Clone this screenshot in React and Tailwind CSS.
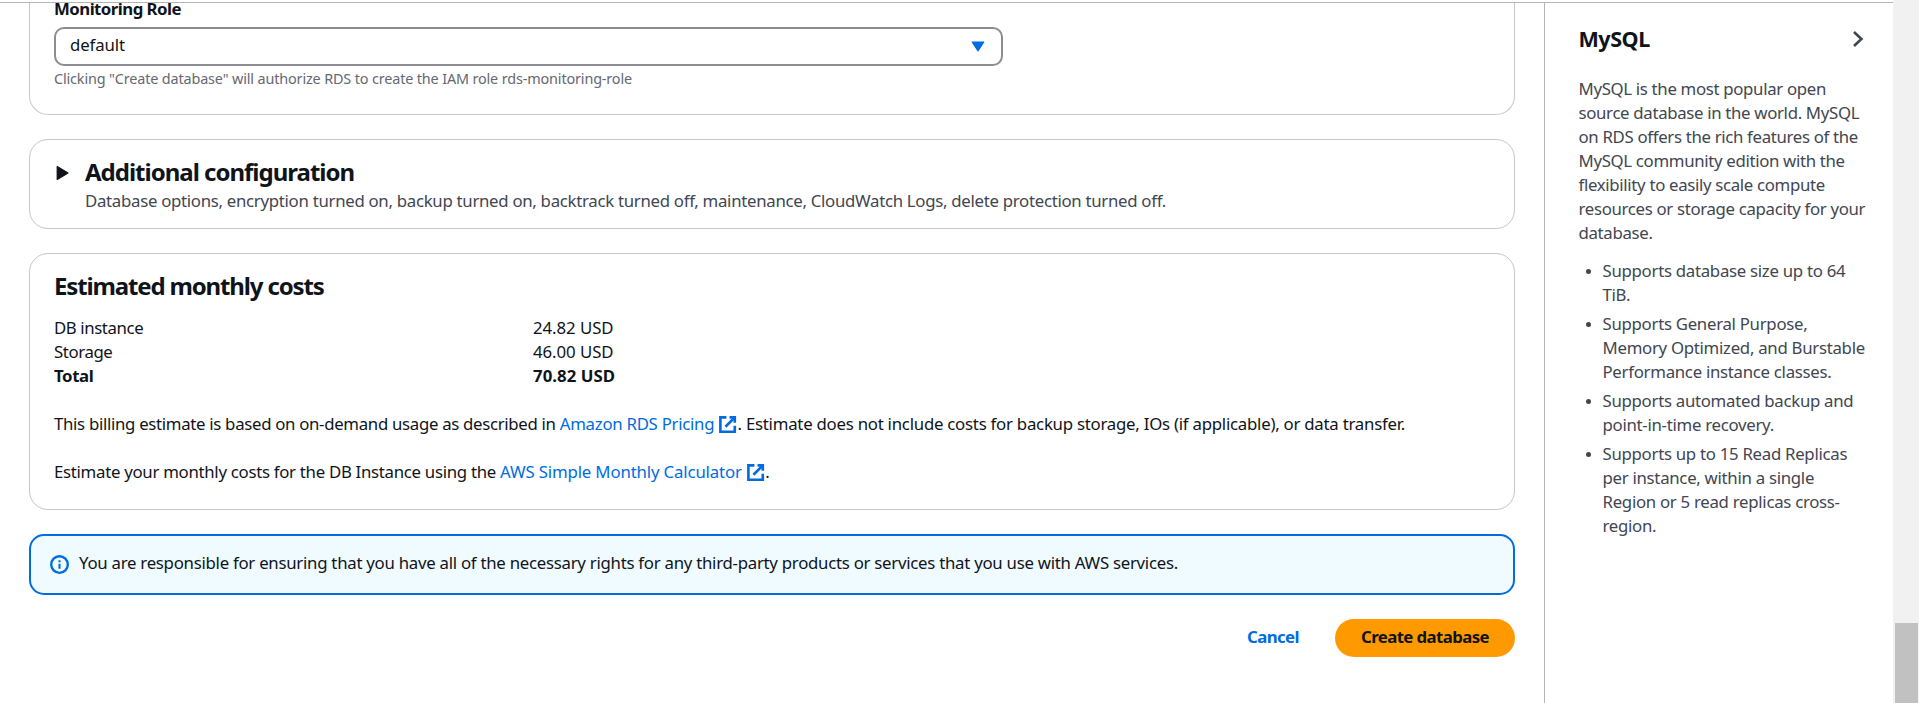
function ExternalIcon() {
  return (
    <svg className="inline-block size-[19.2px] align-[-4px]" viewBox="0 0 16 16" fill="none" stroke="#006ce0" strokeWidth="2.2">
      <path d="M9.6 2H14v4.4" />
      <path d="m6.2 9.8 7.4-7.4" />
      <path d="M14 9.05V14H2V2h5" />
    </svg>
  );
}

function InfoIcon() {
  return (
    <svg className="size-[19px] shrink-0" viewBox="0 0 16 16" fill="none" stroke="#006ce0" strokeWidth="2">
      <circle cx="8" cy="8" r="7" />
      <path d="M8 11.5V7.3M8 6V4.4" strokeWidth="1.8" />
    </svg>
  );
}

function CostRow({ label, value, bold }) {
  return (
    <div className={bold ? "flex font-bold" : "flex"}>
      <span className={bold ? "w-[479px] tracking-[-0.4px]" : "w-[479px] tracking-[-0.4px]"}>{label}</span>
      <span className={bold ? "tracking-[0.04px]" : "tracking-[-0.05px]"}>{value}</span>
    </div>
  );
}

function Bullet({ lines }) {
  return (
    <li className="flex">
      <span className="mt-[10px] mr-[12px] ml-[7px] size-[5px] shrink-0 rounded-full bg-[#424650]" />
      <span>
        {lines.map((line) => (
          <span key={line} className="block">{line}</span>
        ))}
      </span>
    </li>
  );
}

const description = [
  "MySQL is the most popular open",
  "source database in the world. MySQL",
  "on RDS offers the rich features of the",
  "MySQL community edition with the",
  "flexibility to easily scale compute",
  "resources or storage capacity for your",
  "database.",
];

const features = [
  ["Supports database size up to 64", "TiB."],
  ["Supports General Purpose,", "Memory Optimized, and Burstable", "Performance instance classes."],
  ["Supports automated backup and", "point-in-time recovery."],
  ["Supports up to 15 Read Replicas", "per instance, within a single", "Region or 5 read replicas cross-", "region."],
];

export default function App() {
  return (
    <div className="flex h-[703px] w-[1919px] overflow-hidden bg-white font-['Noto_Sans',sans-serif] text-[16.8px] leading-6 whitespace-nowrap text-[#0f141a]">
      <div className="flex h-full w-[1893px] flex-col">
        <div className="h-[3px] shrink-0 border-b border-[#b4b4bb] bg-white" />
        <div className="flex min-h-0 flex-1">
          <main className="flex w-[1544px] flex-col pr-[29px] pl-[29px]">
            <section className="h-[112px] shrink-0 rounded-b-[19px] border border-t-0 border-[#c6c6cd] px-6">
              <div className="-mt-[3px] leading-[18px] font-bold tracking-[-0.53px]">Monitoring Role</div>
              <div className="mt-[9px] flex h-[39px] w-[949px] items-center justify-between rounded-[10px] border-2 border-[#8c8c94] pr-[16px] pl-[14px]">
                <span className="-mt-[3px] tracking-[-0.1px]">default</span>
                <svg className="h-[11px] w-[14px]" viewBox="0 0 14 11">
                  <path d="M1.2 1h11.6L7 9.8z" fill="#006ce0" stroke="#006ce0" strokeWidth="1.2" strokeLinejoin="round" />
                </svg>
              </div>
              <div className="mt-[3px] text-[14.4px] leading-[19px] tracking-[-0.139px] text-[#656871]">
                Clicking "Create database" will authorize RDS to create the IAM role rds-monitoring-role
              </div>
            </section>

            <section className="mt-6 flex h-[90px] shrink-0 rounded-[19px] border border-[#c6c6cd] px-6 pt-[17px]">
              <svg className="mt-[7px] mr-[16px] ml-[2px] h-[18px] w-[13px]" viewBox="0 0 13 18">
                <path d="M1.2 2.5v13L12 9z" fill="#0f141a" stroke="#0f141a" strokeWidth="1.2" strokeLinejoin="round" />
              </svg>
              <div>
                <h2 className="text-[24px] leading-[30px] font-bold tracking-[-1px]">Additional configuration</h2>
                <p className="mt-[2px] tracking-[-0.288px] text-[#424650]">
                  Database options, encryption turned on, backup turned on, backtrack turned off, maintenance, CloudWatch Logs, delete protection turned off.
                </p>
              </div>
            </section>

            <section className="mt-6 h-[257px] shrink-0 rounded-[19px] border border-[#c6c6cd] px-6 pt-[17px]">
              <h2 className="text-[24px] leading-[30px] font-bold tracking-[-1.15px]">Estimated monthly costs</h2>
              <div className="mt-[15px]">
                <CostRow label="DB instance" value="24.82 USD" />
                <CostRow label="Storage" value="46.00 USD" />
                <CostRow label="Total" value="70.82 USD" bold />
              </div>
              <p className="mt-6 h-6">
                <span className="tracking-[-0.305px]">This billing estimate is based on on-demand usage as described in </span>
                <a className="tracking-[-0.27px] text-[#006ce0]">
                  Amazon RDS Pricing <ExternalIcon />
                </a>
                <span className="tracking-[-0.24px]">. Estimate does not include costs for backup storage, IOs (if applicable), or data transfer.</span>
              </p>
              <p className="mt-6 h-6">
                <span className="tracking-[-0.285px]">Estimate your monthly costs for the DB Instance using the </span>
                <a className="tracking-[-0.15px] text-[#006ce0]">
                  AWS Simple Monthly Calculator <ExternalIcon />
                </a>
                .
              </p>
            </section>

            <div className="mt-6 flex h-[61px] shrink-0 items-start rounded-[15px] border-2 border-[#006ce0] bg-[#f0fbff] pt-[15px] pl-[19px]">
              <div className="mt-[4px] mr-[10px]">
                <InfoIcon />
              </div>
              <p className="tracking-[-0.261px]">
                You are responsible for ensuring that you have all of the necessary rights for any third-party products or services that you use with AWS services.
              </p>
            </div>

            <div className="mt-6 flex h-[38px] shrink-0 items-center justify-end font-bold">
              <button className="mr-[36px] pb-[2px] tracking-[-0.56px] text-[#006ce0]">Cancel</button>
              <button className="h-[38px] w-[180px] rounded-full bg-[#ff9900] pb-[2px] tracking-[-0.58px]">Create database</button>
            </div>
          </main>

          <aside className="w-[349px] border-l border-[#b4b4bb] pt-[22px] pl-[33.5px] text-[#424650]">
            <div className="flex items-start justify-between pr-[29px]">
              <h3 className="text-[21.6px] leading-[27px] font-bold tracking-[-0.5px] text-[#0f141a]">MySQL</h3>
              <svg className="mt-[5px] h-[18px] w-[12px]" viewBox="0 0 12 18" fill="none" stroke="#424650" strokeWidth="2.6">
                <path d="m2 2 7.4 7L2 16" />
              </svg>
            </div>
            <p className="mt-[25px] tracking-[-0.32px]">
              {description.map((line) => (
                <span key={line} className="block">{line}</span>
              ))}
            </p>
            <ul className="mt-[14px] flex flex-col gap-[5px] tracking-[-0.28px]">
              {features.map((lines) => (
                <Bullet key={lines[0]} lines={lines} />
              ))}
            </ul>
          </aside>
        </div>
      </div>
      <div className="flex w-[26px] flex-col bg-[#f1f1f1] pl-[2px]">
        <div className="mt-[623px] h-[80px] w-[23px] bg-[#c1c1c1]" />
      </div>
    </div>
  );
}
